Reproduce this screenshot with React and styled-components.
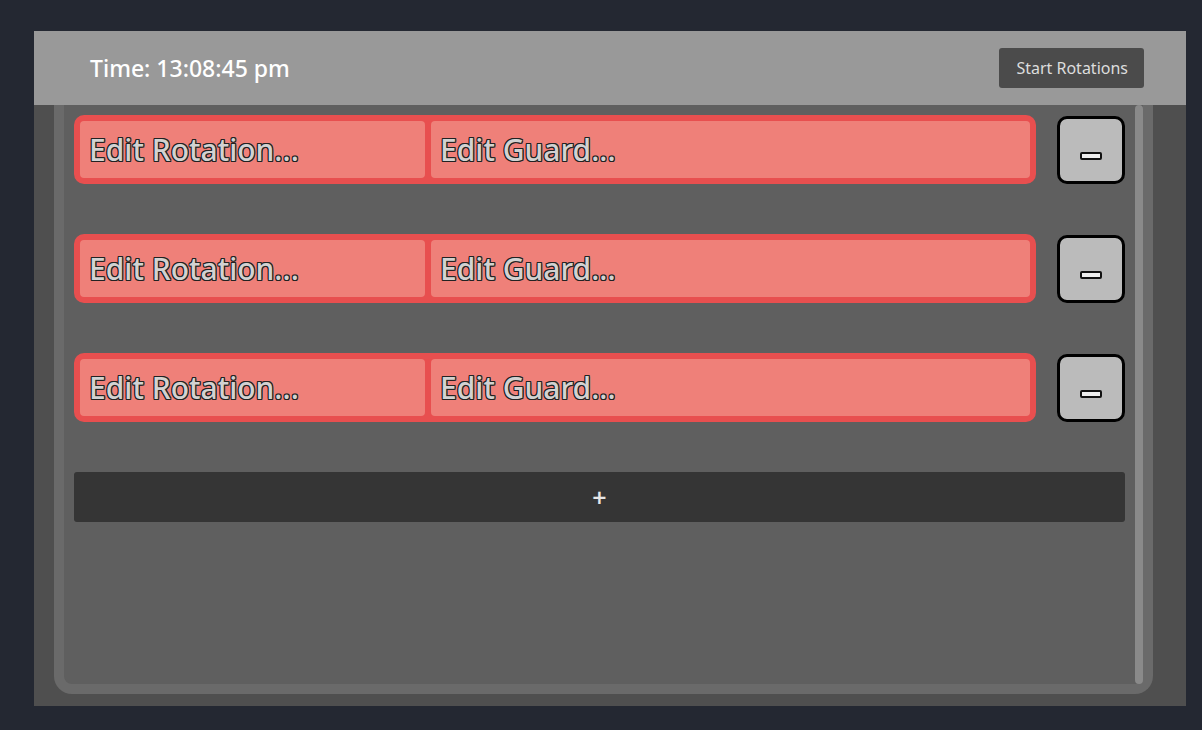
import React from "react";
import styled, { createGlobalStyle } from "styled-components";

const GlobalStyle = createGlobalStyle`
  html, body {
    margin: 0;
    padding: 0;
    background: #242832;
    font-family: "Noto Sans", "Open Sans", sans-serif;
  }
`;

const Page = styled.div`
  box-sizing: border-box;
  width: 1202px;
  height: 730px;
  padding: 31px 16px 24px 34px;
`;

const Window = styled.div`
  display: flex;
  flex-direction: column;
  width: 1152px;
  height: 675px;
  background: #4f4f4f;
`;

const Header = styled.div`
  display: flex;
  align-items: center;
  justify-content: space-between;
  height: 74px;
  padding: 0 42px 0 56px;
  background: #999999;
  flex-shrink: 0;
`;

const Clock = styled.div`
  color: #ffffff;
  font-size: 23px;
  font-weight: 500;
`;

const StartButton = styled.button`
  height: 40px;
  padding: 0 16px 0 17px;
  border: none;
  border-radius: 3px;
  background: #4b4b4b;
  color: #dddddd;
  font-family: "Noto Sans", sans-serif;
  font-size: 16px;
`;

const Body = styled.div`
  flex: 1;
  display: flex;
  padding: 0 33px 12px 20px;
`;

const Panel = styled.div`
  flex: 1;
  display: flex;
  background: #5f5f5f;
  border: 10px solid #6a6a6a;
  border-top: none;
  border-radius: 0 0 18px 18px;
`;

const List = styled.div`
  flex: 1;
  display: flex;
  flex-direction: column;
  gap: 50px;
  padding: 10px;
`;

const ScrollThumb = styled.div`
  width: 8px;
  background: #8a8a8a;
  border-radius: 4px;
`;

const Row = styled.div`
  display: flex;
  align-items: center;
  gap: 21px;
`;

const Rotation = styled.div`
  flex: 1;
  display: flex;
  gap: 6px;
  height: 57px;
  border: 6px solid #e84f4f;
  border-radius: 10px;
  background: #e84f4f;
`;

const Field = styled.div`
  box-sizing: border-box;
  display: flex;
  align-items: center;
  ${(p) => (p.$width ? `width: ${p.$width}px;` : "flex: 1;")}
  padding-left: 9px;
  background: #ef8079;
  border-radius: 4px;
  color: #d2d2d2;
  font-size: 30px;
  font-weight: 500;
  text-shadow: 1px 0 #222, -1px 0 #222, 0 1px #222, 0 -1px #222,
    1px 1px #222, -1px -1px #222, 1px -1px #222, -1px 1px #222;
`;

const RemoveButton = styled.button`
  display: flex;
  align-items: center;
  justify-content: center;
  width: 68px;
  height: 68px;
  border: 3px solid #000000;
  border-radius: 10px;
  background: #bbbbbb;
  padding: 0;
`;

const Dash = styled.span`
  width: 18px;
  height: 4px;
  margin-top: 12px;
  border: 2px solid #111111;
  border-radius: 2px;
  background: #eeeeee;
`;

const AddButton = styled.button`
  height: 50px;
  border: none;
  border-radius: 3px;
  background: #353535;
  color: #e6e6e6;
  font-family: "Noto Sans", sans-serif;
  font-size: 25px;
  font-weight: 600;
  line-height: 1;
`;

const rotations = [1, 2, 3];

export default function App() {
  return (
    <>
      <GlobalStyle />
      <Page>
        <Window>
          <Header>
            <Clock>Time: 13:08:45 pm</Clock>
            <StartButton>Start Rotations</StartButton>
          </Header>
          <Body>
            <Panel>
              <List>
                {rotations.map((r) => (
                  <Row key={r}>
                    <Rotation>
                      <Field $width={345}>Edit Rotation...</Field>
                      <Field>Edit Guard...</Field>
                    </Rotation>
                    <RemoveButton>
                      <Dash />
                    </RemoveButton>
                  </Row>
                ))}
                <AddButton>+</AddButton>
              </List>
              <ScrollThumb />
            </Panel>
          </Body>
        </Window>
      </Page>
    </>
  );
}
